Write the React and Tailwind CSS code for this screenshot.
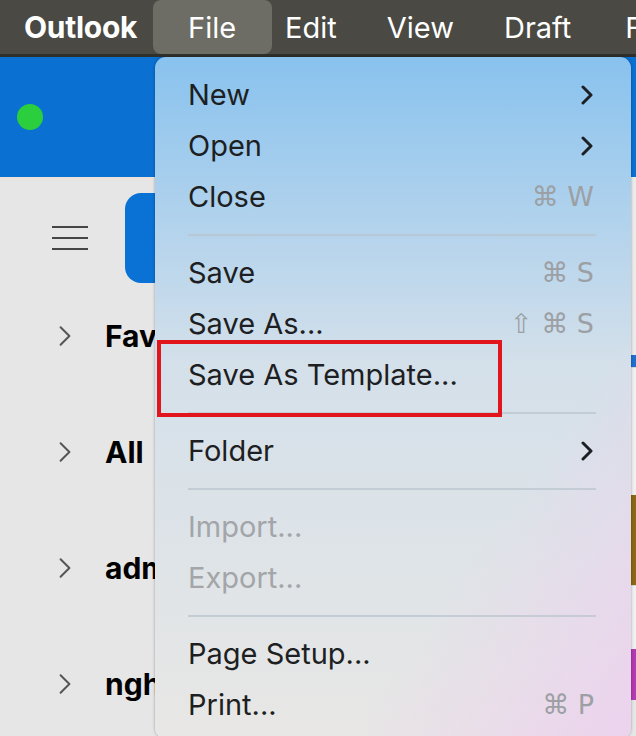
import React from "react";

// macOS menu bar + Outlook window behind an open File menu

const MENU = [
  { label: "New", submenu: true },
  { label: "Open", submenu: true },
  { label: "Close", shortcut: "⌘ W" },
  { sep: true },
  { label: "Save", shortcut: "⌘ S" },
  { label: "Save As...", shortcut: "⇧ ⌘ S" },
  { label: "Save As Template..." },
  { sep: true },
  { label: "Folder", submenu: true },
  { sep: true },
  { label: "Import...", disabled: true },
  { label: "Export...", disabled: true },
  { sep: true },
  { label: "Page Setup..." },
  { label: "Print...", shortcut: "⌘ P" },
];

const FOLDERS = ["Favorites", "All", "admin@outlook.com", "nghia@outlook.com"];

const Chevron = ({ className, strokeWidth = 2.6 }) => (
  <svg viewBox="0 0 12 20" className={className} fill="none" stroke="currentColor" strokeWidth={strokeWidth} strokeLinecap="round" strokeLinejoin="round">
    <polyline points="2,2 10,10 2,18" />
  </svg>
);

export default function App() {
  return (
    <div className="relative w-[636px] h-[736px] overflow-hidden bg-[#e6e6e6] font-['Inter','Liberation_Sans',sans-serif]">
      {/* Menu bar */}
      <div className="flex items-center h-[57px] bg-[#4a4943] border-b-[3px] border-[#2f2f2b] text-white text-[29px] leading-none whitespace-nowrap">
        <span className="pl-[24px] pr-[16px] font-bold text-[30px] tracking-[-0.3px]">Outlook</span>
        <span className="flex items-center h-[54px] w-[119px] shrink-0 pl-[35px] rounded-[8px] bg-[#6d6d65]">File</span>
        <span className="pl-[13px]">Edit</span>
        <span className="pl-[50px]">View</span>
        <span className="pl-[50px]">Draft</span>
        <span className="pl-[54px]">F</span>
      </div>

      {/* Window */}
      <div className="flex">
        <div className="w-[631px] shrink-0">
          <div className="h-[120px] bg-[#0a70d2] flex items-center pl-[17px]">
            <span className="w-[26px] h-[26px] rounded-full bg-[#2bce3c]" />
          </div>
          <div className="h-[3px] bg-[#ece4dc]" />
          <div className="flex items-start pt-[13px] pl-[52px]">
            <div className="flex flex-col gap-[9px] mt-[33px]">
              <span className="block w-[36px] h-[2px] bg-[#454545]" />
              <span className="block w-[36px] h-[2px] bg-[#454545]" />
              <span className="block w-[36px] h-[2px] bg-[#454545]" />
            </div>
            <div className="ml-[37px] w-[200px] h-[90px] rounded-[16px] bg-[#0a72d4]" />
          </div>
          <div className="flex flex-col pl-[58px] pt-[37px] gap-[84px]">
            {FOLDERS.map((f) => (
              <div key={f} className="flex items-center h-[32px]">
                <Chevron className="w-[14px] h-[22px] text-[#555]" strokeWidth={1.8} />
                <span className="ml-[33px] w-[50px] overflow-hidden whitespace-nowrap text-[30px] font-bold text-black leading-[34px]">{f}</span>
              </div>
            ))}
          </div>
        </div>
        <div className="flex-1 flex flex-col">
          <div className="h-[120px] bg-[#0a70d2]" />
          <div className="h-[178px] bg-[#ebebeb]" />
          <div className="h-[12px] bg-[#1f6fd0]" />
          <div className="h-[80px] bg-[#f0f0f0] border-t border-[#d8d8d8]" />
          <div className="h-[48px] bg-[#f0f0f0]" />
          <div className="h-[90px] bg-[#8c6812]" />
          <div className="h-[64px] bg-[#f0f0f0] border-t border-[#d8d8d8]" />
          <div className="flex-1 bg-[#b23bb3]" />
        </div>
      </div>

      {/* File menu */}
      <div className="absolute left-[155px] top-[57px] w-[476px] h-[682px] rounded-[11px] overflow-hidden shadow-[0_0_3px_rgba(0,0,0,0.35)] bg-linear-to-b from-[#88c2ee] via-[#d4e0ea] via-45% to-[#e8e7e5]">
        <div className="absolute inset-0 bg-linear-to-tl from-[#ecd2ee] via-transparent via-30% to-transparent" />
        <div className="relative flex flex-col pt-[12px] pl-[33px] pr-[35px]">
          {MENU.map((m, i) =>
            m.sep ? (
              <div key={i} className="h-[25px] flex items-center">
                <div className="w-full h-[2px] bg-[#b9c3cc]/70" />
              </div>
            ) : (
              <div key={i} className="h-[51px] flex items-center justify-between text-[29px] leading-none">
                <span className={m.disabled ? "text-[#a3a5a8]" : "text-[#1d1f22]"}>{m.label}</span>
                {m.submenu && <Chevron className="w-[12px] h-[20px] text-[#1d1f22] mr-[3px]" strokeWidth={3} />}
                {m.shortcut && (
                  <span className="text-[#9ca0a4] font-['DejaVu_Sans','Inter',sans-serif] text-[27px] tracking-[0px] mr-[2px]">
                    {m.shortcut}
                  </span>
                )}
              </div>
            )
          )}
        </div>
      </div>

      {/* Highlight box */}
      <div className="absolute left-[157px] top-[340px] w-[345px] h-[77px] border-[4px] border-[#e2141c]" />
    </div>
  );
}
